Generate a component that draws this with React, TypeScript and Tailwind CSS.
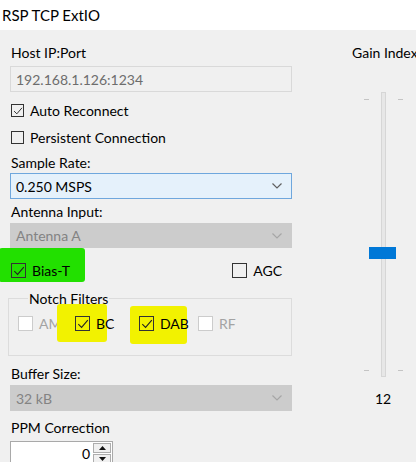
import type { ReactNode } from "react";

const font = "font-['Lato','Noto_Sans',sans-serif]";

function Chevron({ color }: { color: string }) {
  return (
    <svg width="10" height="6" viewBox="0 0 10 6" className="shrink-0">
      <polyline points="0.5,0.5 5,5 9.5,0.5" fill="none" stroke={color} strokeWidth="1.2" />
    </svg>
  );
}

function Box({ checked, disabled, size = 15 }: { checked?: boolean; disabled?: boolean; size?: number }) {
  return (
    <span
      className={
        "relative grid place-items-center shrink-0 border " +
        (disabled ? "border-[#cccccc] bg-white" : "border-[#333333] bg-transparent")
      }
      style={{ width: size, height: size }}
    >
      {checked && (
        <svg width={size - 3} height={size - 3} viewBox="0 0 11 11">
          <polyline points="1.2,5.6 4.2,8.6 9.9,2" fill="none" stroke="#222" strokeWidth="1" />
        </svg>
      )}
    </span>
  );
}

function Check({
  label,
  checked,
  disabled,
  size,
  className = "",
  children,
}: {
  label: string;
  checked?: boolean;
  disabled?: boolean;
  size?: number;
  className?: string;
  children?: ReactNode;
}) {
  return (
    <div className={"relative flex items-center gap-[6px] h-[17px] " + className}>
      {children}
      <Box checked={checked} disabled={disabled} size={size} />
      <span className={"relative leading-[17px] " + (disabled ? "text-[#a3a3a3]" : "text-black")}>{label}</span>
    </div>
  );
}

function Label({ text, className = "" }: { text: string; className?: string }) {
  return <div className={"h-[17px] leading-[17px] pl-[1px] text-black " + className}>{text}</div>;
}

function Combo({ value, disabled, className = "" }: { value: string; disabled?: boolean; className?: string }) {
  return (
    <div
      className={
        "flex items-center justify-between border pl-[5px] pr-[9px] " +
        (disabled
          ? "h-[25px] bg-[#cccccc] border-[#cccccc] text-[#838383]"
          : "h-[26px] bg-[#e5f1fb] border-[#6fa7dd] text-black") +
        " " +
        className
      }
    >
      <span>{value}</span>
      <Chevron color={disabled ? "#a6a6a6" : "#606060"} />
    </div>
  );
}

export default function App() {
  return (
    <div className={"w-[416px] h-[462px] overflow-hidden bg-[#f0f0f0] text-[14px] " + font}>
      <div className="h-[30px] bg-white pl-[2px] flex items-center text-[15px] text-black">RSP TCP ExtIO</div>
      <div className="flex">
        <div className="w-[282px] ml-[10px] flex flex-col">
          <Label text="Host IP:Port" className="mt-[14px]" />
          <div className="mt-[5px] h-[26px] border border-[#d9d9d9] bg-[#f0f0f0] pl-[5px] flex items-center text-[#6d6d6d]">
            192.168.1.126:1234
          </div>
          <Check label="Auto Reconnect" checked size={13} className="mt-[10px] pl-[1px]" />
          <Check label="Persistent Connection" size={13} className="mt-[10px] pl-[1px]" />
          <Label text="Sample Rate:" className="mt-[8px]" />
          <Combo value="0.250 MSPS" className="mt-[2px]" />
          <Label text="Antenna Input:" className="mt-[4px]" />
          <Combo value="Antenna A" disabled className="mt-[3px]" />
          <div className="mt-[14px] flex items-center justify-between pr-[10px]">
            <Check label="Bias-T" checked className="pl-[1px]">
              <span className="absolute left-[-11px] top-[-14px] w-[86px] h-[34px] bg-[#22e000] rounded-[3px]" />
            </Check>
            <Check label="AGC" className="gap-[4px]" />
          </div>
          <fieldset className="mt-[11px] -ml-[2px] w-[284px] border border-[#dcdcdc] pt-[8px] pb-[23px] pl-[9px]">
            <legend className="ml-[10px] px-[1px] h-[17px] leading-[17px] text-black">Notch Filters</legend>
            <div className="flex items-center">
              <Check label="AM" disabled className="w-[57px]" />
              <Check label="BC" checked className="w-[64px] gap-[5px]">
                <span className="absolute left-[-18px] top-[-11px] w-[50px] h-[38px] bg-[#f2f200] rounded-[3px]" />
              </Check>
              <Check label="DAB" checked className="w-[59px] gap-[5px]">
                <span className="absolute left-[-9px] top-[-9px] w-[57px] h-[38px] bg-[#f2f200] rounded-[3px]" />
              </Check>
              <Check label="RF" disabled className="gap-[5px]" />
            </div>
          </fieldset>
          <Label text="Buffer Size:" className="mt-[9px]" />
          <Combo value="32 kB" disabled className="mt-[3px] h-[26px]" />
          <Label text="PPM Correction" className="mt-[8px]" />
          <div className="mt-[5px] w-[103px] h-[24px] border border-[#a9a9a9] bg-white flex items-center">
            <span className="flex-1 text-right pr-[3px] text-black">0</span>
            <div className="flex flex-col gap-[1px] mr-[1px] self-start mt-[1px]">
              <div className="w-[18px] h-[10px] border border-[#adadad] bg-[#f0f0f0] grid place-items-center">
                <svg width="7" height="4" viewBox="0 0 7 4">
                  <polygon points="0,4 3.5,0 7,4" fill="#111" />
                </svg>
              </div>
              <div className="w-[18px] h-[10px] border border-[#adadad] bg-[#f0f0f0] grid place-items-center">
                <svg width="7" height="4" viewBox="0 0 7 4">
                  <polygon points="0,0 3.5,4 7,0" fill="#111" />
                </svg>
              </div>
            </div>
          </div>
        </div>
        <div className="flex-1 flex flex-col pl-[60px]">
          <div className="mt-[14px] h-[17px] leading-[17px] whitespace-nowrap text-black">Gain Index</div>
          <div className="relative mt-[31px] ml-[12px] w-[40px] h-[285px]">
            <span className="absolute left-[17px] top-0 w-[5px] h-[285px] bg-[#e7e7e7] border border-[#d6d6d6]" />
            <span className="absolute left-0 top-[7px] w-[5px] h-[1px] bg-[#c4c4c4]" />
            <span className="absolute left-[34px] top-[7px] w-[5px] h-[1px] bg-[#c4c4c4]" />
            <span className="absolute left-0 top-[278px] w-[5px] h-[1px] bg-[#c4c4c4]" />
            <span className="absolute left-[34px] top-[278px] w-[5px] h-[1px] bg-[#c4c4c4]" />
            <span className="absolute left-[5px] top-[155px] w-[27px] h-[12px] bg-[#0078d7]" />
          </div>
          <div className="mt-[13px] ml-[23px] h-[17px] leading-[17px] text-black">12</div>
        </div>
      </div>
    </div>
  );
}
